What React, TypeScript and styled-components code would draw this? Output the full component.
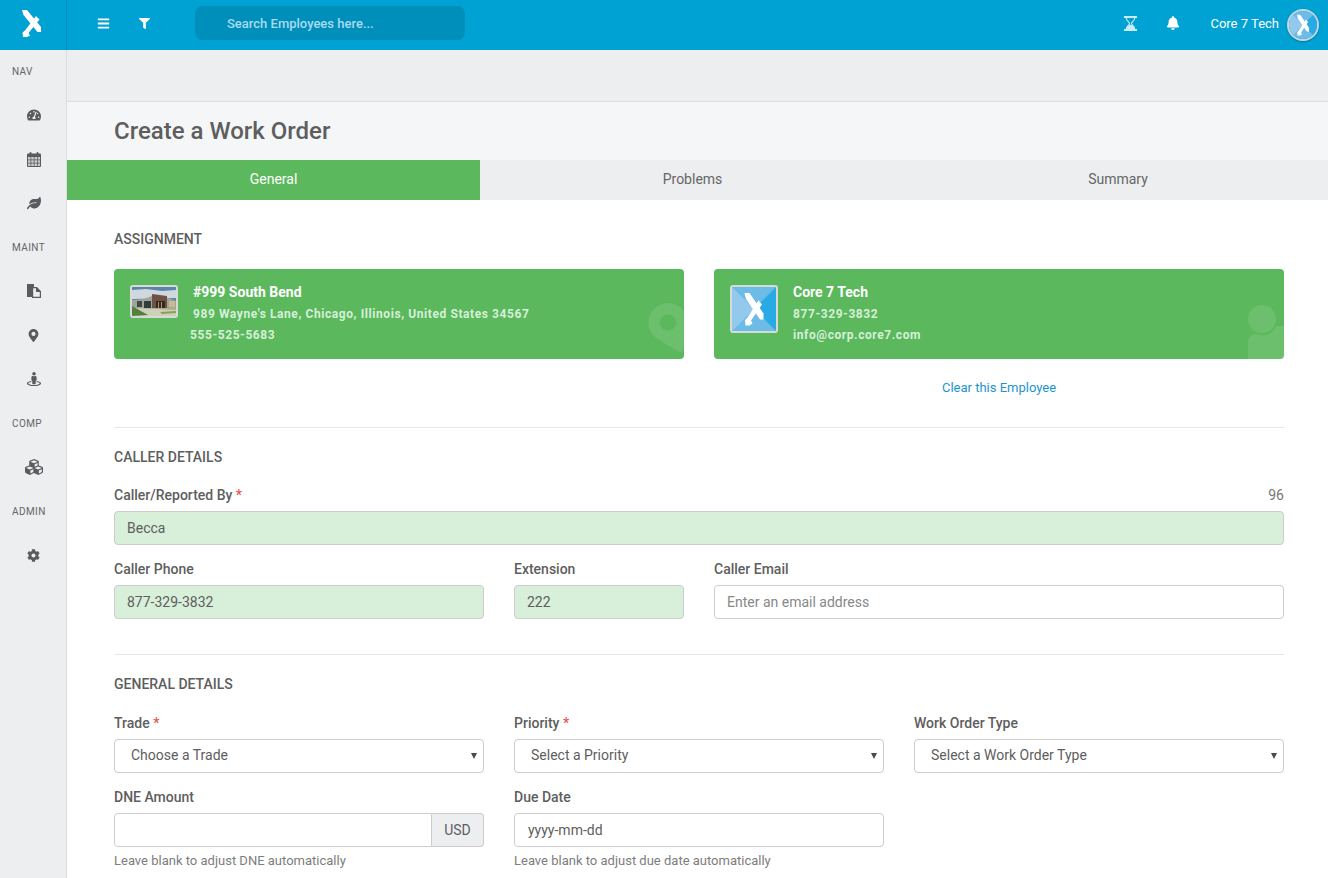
import React from "react";
import styled, { createGlobalStyle } from "styled-components";
import {
  FaBars,
  FaBell,
  FaCog,
  FaCubes,
  FaFilter,
  FaLeaf,
  FaMapMarkerAlt,
  FaStreetView,
  FaTachometerAlt,
} from "react-icons/fa";

const GlobalStyle = createGlobalStyle`
  html, body {
    margin: 0;
    height: 100%;
    overflow: hidden;
    background: #fff;
  }
  body {
    font-family: Roboto, "Liberation Sans", sans-serif;
    font-size: 14px;
    color: #5e5e5e;
  }
  * { box-sizing: border-box; }
`;

const Page = styled.div`
  height: 878px;
  display: flex;
  flex-direction: column;
  overflow: hidden;
`;

const TopBar = styled.header`
  height: 50px;
  flex: none;
  display: flex;
  align-items: center;
  background: #00a1d3;
  color: #fff;
`;

const LogoCell = styled.div`
  width: 67px;
  height: 50px;
  flex: none;
  display: flex;
  align-items: center;
  justify-content: center;
  border-right: 1px solid #0090bd;
  padding: 0 3px 3px 0;
`;

const TopIcon = styled.span<{ $left: number }>`
  display: flex;
  margin-left: ${(p) => p.$left}px;
  margin-bottom: 4px;
  color: #fff;
  font-size: 13px;
`;

const SearchBox = styled.div`
  width: 270px;
  height: 34px;
  margin: 0 0 4px 45px;
  padding-left: 32px;
  display: flex;
  align-items: center;
  background: #008fba;
  border-radius: 8px;
  color: #a6dcef;
  font-size: 13px;
  font-weight: 500;
`;

const TopRight = styled.div`
  margin-left: auto;
  display: flex;
  align-items: center;
  padding-right: 9px;
`;

const UserName = styled.span`
  margin-left: 30px;
  margin-bottom: 4px;
  font-size: 13px;
  color: #fff;
`;

const Avatar = styled.div`
  width: 32px;
  height: 32px;
  margin-left: 8px;
  border-radius: 50%;
  border: 2px solid #c9d6dc;
  overflow: hidden;
  box-shadow: 0 1px 2px rgba(0, 0, 0, 0.25);
  display: flex;
`;

const Body = styled.div`
  flex: 1;
  display: flex;
  min-height: 0;
`;

const SideBar = styled.nav`
  width: 67px;
  flex: none;
  background: #edeef0;
  border-right: 1px solid #dcdde0;
`;

const SideLabel = styled.div`
  height: 44px;
  padding-left: 12px;
  display: flex;
  align-items: center;
  font-size: 10px;
  letter-spacing: 0.4px;
  color: #666;
  &:first-child {
    height: 43px;
  }
`;

const SideItem = styled.div`
  height: 44px;
  padding-left: 1px;
  display: flex;
  align-items: center;
  justify-content: center;
  color: #5a5a5f;
  font-size: 14px;
`;

const Main = styled.main`
  flex: 1;
  min-width: 0;
`;

const GreyBand = styled.div`
  height: 52px;
  background: #edeef0;
  border-bottom: 1px solid #dcdde0;
`;

const TitleBand = styled.div`
  height: 58px;
  padding-left: 47px;
  display: flex;
  align-items: center;
  background: #f5f6f8;
`;

const Title = styled.h1`
  margin: 0;
  font-size: 24px;
  font-weight: 500;
  color: #5e5e5e;
`;

const Tabs = styled.div`
  height: 40px;
  display: grid;
  grid-template-columns: 413px 425px 1fr;
  background: #edeef0;
`;

const Tab = styled.div<{ $active?: boolean }>`
  display: flex;
  align-items: center;
  justify-content: center;
  padding-bottom: 2px;
  font-size: 14px;
  background: ${(p) => (p.$active ? "#5cb85c" : "transparent")};
  color: ${(p) => (p.$active ? "#fff" : "#666")};
  &:last-child {
    padding-left: 3px;
  }
`;

const Content = styled.div`
  width: 1170px;
  margin-left: 47px;
`;

const Section = styled.section<{ $top: number; $bottom: number }>`
  padding-top: ${(p) => p.$top}px;
  padding-bottom: ${(p) => p.$bottom}px;
  border-bottom: 1px solid #e6e7e9;
  &:last-child {
    border-bottom: none;
  }
`;

const SectionTitle = styled.h2<{ $gap: number }>`
  margin: 0 0 ${(p) => p.$gap}px;
  height: 20px;
  line-height: 20px;
  font-size: 14px;
  font-weight: 500;
  color: #5e5e5e;
  text-transform: uppercase;
`;

const CardRow = styled.div`
  display: grid;
  grid-template-columns: 570px 570px;
  column-gap: 30px;
`;

const Card = styled.div`
  position: relative;
  height: 90px;
  padding: 16px;
  display: flex;
  overflow: hidden;
  border-radius: 4px;
  background: #5bb85d;
`;

const Thumb = styled.div<{ $height: number }>`
  width: 48px;
  height: ${(p) => p.$height}px;
  flex: none;
  display: flex;
  overflow: hidden;
  border: 2px solid #d5dbd6;
  border-radius: 3px;
`;

const CardText = styled.div`
  margin: -3px 0 0 15px;
  font-weight: 700;
  font-size: 12px;
  line-height: 21px;
  color: #d6efd8;
  letter-spacing: 0.58px;
`;

const CardName = styled.div`
  margin-bottom: 1px;
  font-size: 14px;
  font-weight: 700;
  color: #fff;
  letter-spacing: 0;
`;

const Outdent = styled.div`
  margin-left: -3px;
`;

const PinGlyph = styled.span`
  position: absolute;
  right: -10px;
  top: 34px;
  display: flex;
  color: rgba(255, 255, 255, 0.1);
  transform: rotate(-25deg);
  transform-origin: 50% 37.5%;
`;

const PersonGlyph = styled.span`
  position: absolute;
  right: 0;
  top: 35px;
  display: flex;
  color: rgba(255, 255, 255, 0.1);
`;

const LinkRow = styled.div`
  display: grid;
  grid-template-columns: 570px 570px;
  column-gap: 30px;
  margin-top: 19px;
`;

const ClearLink = styled.a`
  grid-column: 2;
  text-align: center;
  line-height: 20px;
  font-size: 13px;
  color: #1d94cf;
`;

const Fields = styled.div<{ $columns: string }>`
  display: grid;
  grid-template-columns: ${(p) => p.$columns};
  column-gap: 30px;
  row-gap: 14px;
  align-items: start;
`;

const Field = styled.div<{ $span?: number }>`
  min-width: 0;
  grid-column: ${(p) => (p.$span ? `span ${p.$span}` : "auto")};
`;

const LabelRow = styled.div`
  height: 20px;
  margin-bottom: 6px;
  display: flex;
  justify-content: space-between;
  align-items: center;
`;

const Label = styled.label`
  font-size: 14px;
  font-weight: 500;
  color: #5e5e5e;
`;

const Required = styled.span`
  color: #e8574f;
`;

const Counter = styled.span`
  font-size: 14px;
  color: #777;
`;

const TextInput = styled.input<{ $filled?: boolean }>`
  display: block;
  width: 100%;
  height: 34px;
  padding: 0 13px 0 12px;
  font: 14px Roboto, "Liberation Sans", sans-serif;
  color: #5e5e5e;
  background: ${(p) => (p.$filled ? "#d8efd9" : "#fff")};
  border: 1px solid #ccc;
  border-radius: 4px;
  outline: none;
  &::placeholder {
    color: #888;
    opacity: 1;
  }
`;

const DateInput = styled(TextInput)`
  padding-left: 13px;
  padding-bottom: 1px;
`;

const SelectWrap = styled.div`
  position: relative;
  &::after {
    content: "";
    position: absolute;
    right: 7px;
    top: 14px;
    border-style: solid;
    border-width: 6px 3px 0;
    border-color: #4a4a4a transparent transparent;
    pointer-events: none;
  }
`;

const SelectInput = styled.select`
  display: block;
  width: 100%;
  height: 34px;
  padding: 0 24px 2px 16px;
  appearance: none;
  font: 14px Roboto, "Liberation Sans", sans-serif;
  color: #5e5e5e;
  background: #fff;
  border: 1px solid #ccc;
  border-radius: 4px;
  outline: none;
`;

const InputGroup = styled.div`
  display: flex;
  ${TextInput} {
    flex: 1;
    min-width: 0;
    border-radius: 4px 0 0 4px;
  }
`;

const Addon = styled.span`
  width: 52px;
  height: 34px;
  flex: none;
  display: flex;
  align-items: center;
  justify-content: center;
  font-size: 14px;
  color: #5e5e5e;
  background: #edeef0;
  border: 1px solid #ccc;
  border-left: none;
  border-radius: 0 4px 4px 0;
`;

const Help = styled.div`
  margin-top: 5px;
  line-height: 18px;
  font-size: 13px;
  color: #7d7d7d;
`;

const xArmDown = "M0 0H5L19 17V22H15.500L1.500 5Z";
const xArmUp = "M14 6L17.500 9.500L6.500 23L8 25.500L5 27H1L.500 22.500L3 20.500Z";

const XMark = () => (
  <svg width="19" height="27" viewBox="0 0 19 27" fill="#fff">
    <path d={xArmDown} />
    <path d={xArmUp} />
  </svg>
);

const Tile = () => (
  <svg width="100%" height="100%" viewBox="0 0 44 44" preserveAspectRatio="none">
    <rect width="44" height="44" fill="#6dbce8" />
    <polygon points="0,0 22,22 0,44" fill="#92c9ec" />
    <polygon points="44,0 22,22 44,44" fill="#2aaae4" />
    <g transform="translate(12.500 6) scale(1 1.200)" fill="#fff">
      <path d={xArmDown} />
      <path d={xArmUp} />
    </g>
  </svg>
);

const BuildingPhoto = () => (
  <svg width="100%" height="100%" viewBox="0 0 44 29" preserveAspectRatio="none">
    <rect width="44" height="14" fill="#5d83a8" />
    <polygon points="0,3 14,2 30,4 44,3 44,11 0,12" fill="#cfd8df" />
    <rect y="18" width="44" height="11" fill="#a9ad93" />
    <polygon points="0,13 12,12 20,9 36,11 44,14 44,21 0,21" fill="#a3a396" />
    <polygon points="20,7 35,9 35,21 20,21" fill="#6f5246" />
    <rect x="24" y="14" width="9" height="7" fill="#33291f" />
    <rect x="26" y="15" width="1" height="6" fill="#b78f5e" />
    <rect x="29" y="15" width="1" height="6" fill="#b78f5e" />
    <rect x="5" y="14" width="5" height="6" fill="#3d4a4b" />
    <rect x="12" y="14" width="7" height="7" fill="#2f3d3f" />
    <rect x="37" y="14" width="6" height="6" fill="#c9b98f" />
    <polygon points="0,21 44,23 44,29 0,29" fill="#cfd0ba" />
    <polygon points="0,19 16,28 0,29" fill="#55803c" />
    <polygon points="28,25 44,24 44,26 30,27" fill="#8aa051" />
  </svg>
);

const PagesIcon = () => (
  <svg width="14" height="14" viewBox="0 0 14 14">
    <path fill="currentColor" d="M0 0h7l0 3H5v10H0z" />
    <path
      fill="#edeef0"
      stroke="currentColor"
      strokeWidth="1.200"
      d="M5.600 3.600h4l3.800 3.800v6H5.600z"
    />
    <path fill="currentColor" d="M9 3.600h1l3.400 3.400v1H9z" />
  </svg>
);

const CalendarIcon = () => (
  <svg width="14" height="15" viewBox="0 0 14 15">
    <rect y="1.500" width="14" height="13.500" rx="1" fill="currentColor" />
    <rect x="2.500" y="0" width="2" height="3.500" rx="1" fill="currentColor" />
    <rect x="9.500" y="0" width="2" height="3.500" rx="1" fill="currentColor" />
    <g fill="#c9cbd0">
      <rect x="1" y="5" width="2.500" height="2.500" />
      <rect x="4.250" y="5" width="2.500" height="2.500" />
      <rect x="7.500" y="5" width="2.500" height="2.500" />
      <rect x="10.750" y="5" width="2.250" height="2.500" />
      <rect x="1" y="8.250" width="2.500" height="2.500" />
      <rect x="4.250" y="8.250" width="2.500" height="2.500" />
      <rect x="7.500" y="8.250" width="2.500" height="2.500" />
      <rect x="10.750" y="8.250" width="2.250" height="2.500" />
      <rect x="1" y="11.500" width="2.500" height="2.500" />
      <rect x="4.250" y="11.500" width="2.500" height="2.500" />
      <rect x="7.500" y="11.500" width="2.500" height="2.500" />
      <rect x="10.750" y="11.500" width="2.250" height="2.500" />
    </g>
  </svg>
);

const HourglassIcon = () => (
  <svg width="13" height="15" viewBox="0 0 13 15">
    <g fill="#c9ecf7">
      <rect width="13" height="2" />
      <rect y="13" width="13" height="2" />
      <path d="M2 13C2 10.500 4.500 9.500 6.500 8.500C8.500 9.500 11 10.500 11 13Z" />
    </g>
    <path
      fill="none"
      stroke="#c9ecf7"
      strokeWidth="1.100"
      d="M2.300 2C2.300 5 5.500 6.300 5.500 7.500C5.500 8.700 2.300 10 2.300 13M10.700 2C10.700 5 7.500 6.300 7.500 7.500C7.500 8.700 10.700 10 10.700 13"
    />
  </svg>
);

const PersonShape = () => (
  <svg width="37" height="55" viewBox="0 0 37 55" fill="currentColor">
    <circle cx="15" cy="15" r="14" />
    <path d="M1 55V38C1 33 4 31 9 30C16 33 25 31 29 22H37V55Z" />
  </svg>
);

export default function App() {
  return (
    <Page>
      <GlobalStyle />
      <TopBar>
        <LogoCell>
          <XMark />
        </LogoCell>
        <TopIcon $left={30}>
          <FaBars />
        </TopIcon>
        <TopIcon $left={29}>
          <FaFilter size={11} />
        </TopIcon>
        <SearchBox>Search Employees here...</SearchBox>
        <TopRight>
          <TopIcon $left={0}>
            <HourglassIcon />
          </TopIcon>
          <TopIcon $left={29}>
            <FaBell size={14} />
          </TopIcon>
          <UserName>Core 7 Tech</UserName>
          <Avatar>
            <Tile />
          </Avatar>
        </TopRight>
      </TopBar>
      <Body>
        <SideBar>
          <SideLabel>NAV</SideLabel>
          <SideItem>
            <FaTachometerAlt />
          </SideItem>
          <SideItem>
            <CalendarIcon />
          </SideItem>
          <SideItem>
            <FaLeaf />
          </SideItem>
          <SideLabel>MAINT</SideLabel>
          <SideItem>
            <PagesIcon />
          </SideItem>
          <SideItem>
            <FaMapMarkerAlt size={13} />
          </SideItem>
          <SideItem>
            <FaStreetView />
          </SideItem>
          <SideLabel>COMP</SideLabel>
          <SideItem>
            <FaCubes size={18} />
          </SideItem>
          <SideLabel>ADMIN</SideLabel>
          <SideItem>
            <FaCog size={13} />
          </SideItem>
        </SideBar>
        <Main>
          <GreyBand />
          <TitleBand>
            <Title>Create a Work Order</Title>
          </TitleBand>
          <Tabs>
            <Tab $active>General</Tab>
            <Tab>Problems</Tab>
            <Tab>Summary</Tab>
          </Tabs>
          <Content>
            <Section $top={29} $bottom={29}>
              <SectionTitle $gap={20}>Assignment</SectionTitle>
              <CardRow>
                <Card>
                  <Thumb $height={33}>
                    <BuildingPhoto />
                  </Thumb>
                  <CardText>
                    <CardName>#999 South Bend</CardName>
                    <div>989 Wayne's Lane, Chicago, Illinois, United States 34567</div>
                    <Outdent>555-525-5683</Outdent>
                  </CardText>
                  <PinGlyph>
                    <FaMapMarkerAlt size={52} />
                  </PinGlyph>
                </Card>
                <Card>
                  <Thumb $height={48}>
                    <Tile />
                  </Thumb>
                  <CardText>
                    <CardName>Core 7 Tech</CardName>
                    <div>877-329-3832</div>
                    <div>info@corp.core7.com</div>
                  </CardText>
                  <PersonGlyph>
                    <PersonShape />
                  </PersonGlyph>
                </Card>
              </CardRow>
              <LinkRow>
                <ClearLink>Clear this Employee</ClearLink>
              </LinkRow>
            </Section>
            <Section $top={19} $bottom={35}>
              <SectionTitle $gap={18}>Caller Details</SectionTitle>
              <Fields $columns="370px 170px 570px">
                <Field $span={3}>
                  <LabelRow>
                    <Label>
                      Caller/Reported By <Required>*</Required>
                    </Label>
                    <Counter>96</Counter>
                  </LabelRow>
                  <TextInput $filled defaultValue="Becca" />
                </Field>
                <Field>
                  <LabelRow>
                    <Label>Caller Phone</Label>
                  </LabelRow>
                  <TextInput $filled defaultValue="877-329-3832" />
                </Field>
                <Field>
                  <LabelRow>
                    <Label>Extension</Label>
                  </LabelRow>
                  <TextInput $filled defaultValue="222" />
                </Field>
                <Field>
                  <LabelRow>
                    <Label>Caller Email</Label>
                  </LabelRow>
                  <TextInput placeholder="Enter an email address" />
                </Field>
              </Fields>
            </Section>
            <Section $top={19} $bottom={0}>
              <SectionTitle $gap={19}>General Details</SectionTitle>
              <Fields $columns="370px 370px 370px">
                <Field>
                  <LabelRow>
                    <Label>
                      Trade <Required>*</Required>
                    </Label>
                  </LabelRow>
                  <SelectWrap>
                    <SelectInput defaultValue="Choose a Trade">
                      <option>Choose a Trade</option>
                    </SelectInput>
                  </SelectWrap>
                </Field>
                <Field>
                  <LabelRow>
                    <Label>
                      Priority <Required>*</Required>
                    </Label>
                  </LabelRow>
                  <SelectWrap>
                    <SelectInput defaultValue="Select a Priority">
                      <option>Select a Priority</option>
                    </SelectInput>
                  </SelectWrap>
                </Field>
                <Field>
                  <LabelRow>
                    <Label>Work Order Type</Label>
                  </LabelRow>
                  <SelectWrap>
                    <SelectInput defaultValue="Select a Work Order Type">
                      <option>Select a Work Order Type</option>
                    </SelectInput>
                  </SelectWrap>
                </Field>
                <Field>
                  <LabelRow>
                    <Label>DNE Amount</Label>
                  </LabelRow>
                  <InputGroup>
                    <TextInput />
                    <Addon>USD</Addon>
                  </InputGroup>
                  <Help>Leave blank to adjust DNE automatically</Help>
                </Field>
                <Field>
                  <LabelRow>
                    <Label>Due Date</Label>
                  </LabelRow>
                  <DateInput defaultValue="yyyy-mm-dd" />
                  <Help>Leave blank to adjust due date automatically</Help>
                </Field>
              </Fields>
            </Section>
          </Content>
        </Main>
      </Body>
    </Page>
  );
}
